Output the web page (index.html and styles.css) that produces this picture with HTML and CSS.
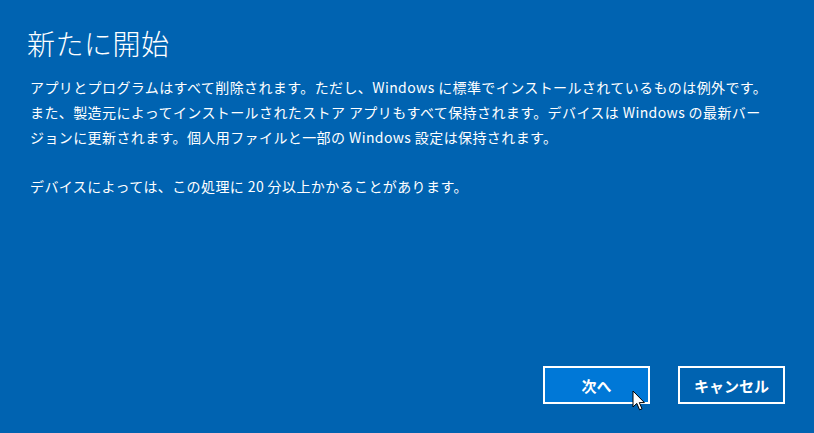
FILE: index.html
```html
<!DOCTYPE html>
<html lang="ja">
<head>
<meta charset="utf-8">
<link rel="stylesheet" href="styles.css">
</head>
<body>
<div class="dialog">
  <h1 class="title">新たに開始</h1>
  <div class="content">
    <p class="para">アプリとプログラムはすべて削除されます。ただし、Windows に標準でインストールされているものは例外です。<br>また、製造元によってインストールされたストア アプリもすべて保持されます。デバイスは Windows の最新バー<br>ジョンに更新されます。個人用ファイルと一部の Windows 設定は保持されます。</p>
    <p class="para">デバイスによっては、この処理に 20 分以上かかることがあります。</p>
  </div>
  <div class="actions">
    <button class="btn btn-primary">次へ</button>
    <button class="btn">キャンセル</button>
    <svg class="cursor" width="14" height="22" viewBox="0 0 14 22">
      <path d="M1 1 L1 17 L4.8 13.4 L7.6 19.8 L10 18.8 L7.3 12.6 L12.4 12.6 Z" fill="#ffffff" stroke="#000000" stroke-width="1" stroke-linejoin="round"/>
    </svg>
  </div>
</div>
</body>
</html>
```

FILE: styles.css
```css
html, body {
  margin: 0;
  padding: 0;
}
body {
  width: 814px;
  height: 433px;
  background: #0063b1;
  color: #ffffff;
  font-family: "Noto Sans CJK JP", "Noto Sans", sans-serif;
  overflow: hidden;
}
.dialog {
  height: 433px;
  box-sizing: border-box;
  padding: 27px 29px 29px 30px;
  display: flex;
  flex-direction: column;
}
.title {
  margin: 0;
  font-size: 28px;
  font-weight: 300;
  line-height: 32px;
  letter-spacing: 0.5px;
  margin-left: -3px;
}
.content {
  margin-top: 15.5px;
  flex: 1;
}
.para {
  margin: 0 0 24px 0;
  font-size: 14px;
  line-height: 25px;
  letter-spacing: 0.4px;
  white-space: nowrap;
}
.actions {
  display: flex;
  justify-content: flex-end;
  gap: 28px;
  position: relative;
}
.btn {
  width: 107px;
  height: 38px;
  box-sizing: border-box;
  border: 2px solid #ffffff;
  background: transparent;
  color: #ffffff;
  font-family: "Noto Sans CJK JP", "Noto Sans", sans-serif;
  font-size: 15px;
  font-weight: 700;
  padding: 0;
}
.btn-primary {
  background: #0078d7;
}
.cursor {
  position: absolute;
  left: 602px;
  top: 24px;
}
```
